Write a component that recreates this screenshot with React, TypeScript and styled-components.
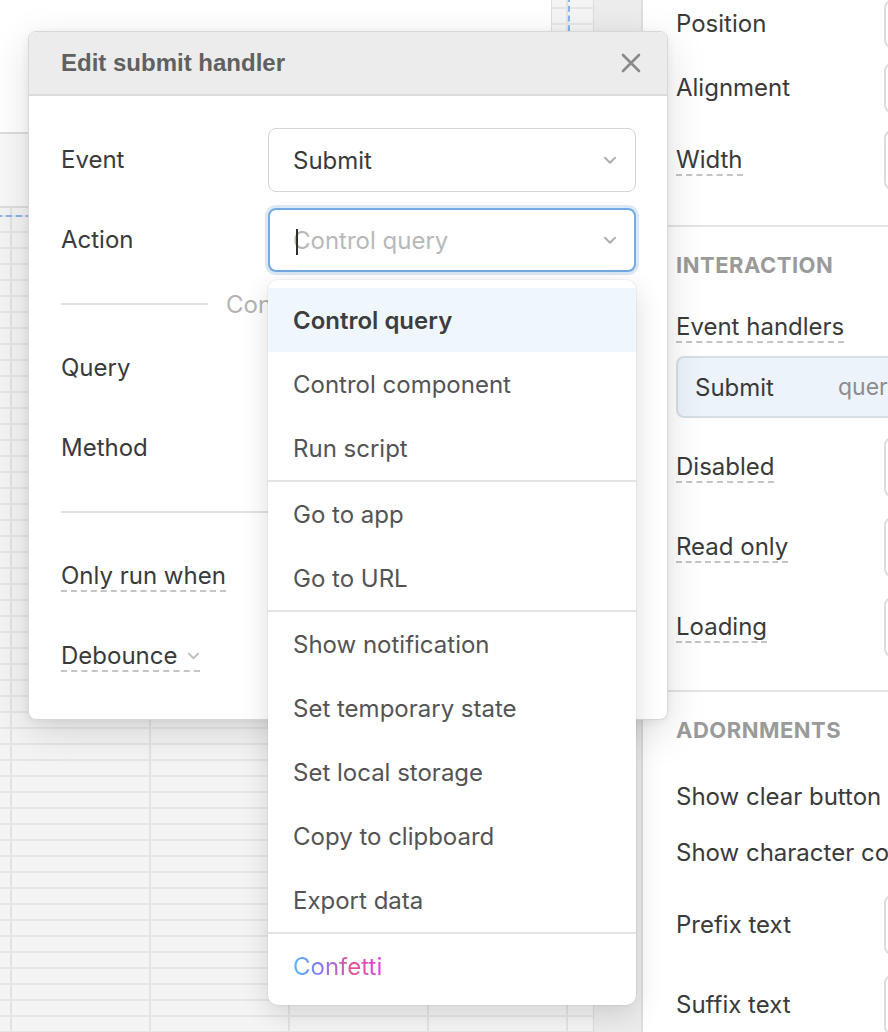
import React from 'react';
import styled, { createGlobalStyle } from 'styled-components';

const GlobalStyle = createGlobalStyle`
  * { box-sizing: border-box; }
  body {
    margin: 0;
    background: #ffffff;
    font-family: Inter, "Noto Sans", sans-serif;
  }
`;

const actionGroups = [
  ['Control query', 'Control component', 'Run script'],
  ['Go to app', 'Go to URL'],
  ['Show notification', 'Set temporary state', 'Set local storage', 'Copy to clipboard', 'Export data'],
];

const Page = styled.div`
  position: relative;
  display: flex;
  width: 888px;
  height: 1032px;
  overflow: hidden;
  color: #3d3d3d;
  font-family: Inter, "Noto Sans", sans-serif;
`;

// ---- canvas behind the modal ----
const Canvas = styled.div`
  position: relative;
  flex: 0 0 593px;
  background-color: #f4f4f4;
  background-image:
    linear-gradient(#e6e6e6 2px, transparent 2px),
    linear-gradient(90deg, #e3e3e3 2px, transparent 2px);
  background-size: 100% 16px, 139px 100%;
  background-position: 0 7px, 10px 0;
`;

const WidgetTop = styled.div`
  width: 552px;
  height: 134px;
  background: #ffffff;
  border-right: 1px solid #dedede;
  border-bottom: 2px solid #dddddd;
`;

const WidgetBody = styled.div`
  width: 552px;
  height: 74px;
  background: #f8f8f8;
  border-right: 1px solid #dedede;
  border-bottom: 2px solid #dddddd;
`;

const SelectionOutline = styled.div`
  position: absolute;
  left: -4px;
  top: -4px;
  width: 574px;
  height: 221px;
  border: 2px dashed #86b4e6;
  pointer-events: none;
`;

const Gutter = styled.div`
  flex: 0 0 50px;
  background: #ececec;
  border-left: 1px solid #dcdcdc;
  border-right: 2px solid #dedede;
`;

// ---- inspector on the right ----
const Inspector = styled.div`
  flex: 1;
  min-width: 0;
  background: #ffffff;
  overflow: hidden;
  white-space: nowrap;
`;

const Section = styled.div<{ $pt: number; $pb: number; $last?: boolean }>`
  padding: ${(p) => p.$pt}px 0 ${(p) => p.$pb}px 33px;
  border-bottom: ${(p) => (p.$last ? 'none' : '2px solid #e4e4e4')};
`;

const SectionTitle = styled.div`
  height: 36px;
  display: flex;
  align-items: center;
  font-size: 22px;
  font-weight: 700;
  letter-spacing: 0.5px;
  color: #9a9a9a;
`;

const PropRow = styled.div<{ $h: number; $mt?: number }>`
  height: ${(p) => p.$h}px;
  margin-top: ${(p) => p.$mt ?? 0}px;
  display: flex;
  align-items: center;
`;

const PropLabel = styled.span<{ $dashed?: boolean }>`
  flex-shrink: 0;
  padding-top: 2px;
  font-size: 24px;
  color: #3a3a3a;
  line-height: 28px;
  border-bottom: ${(p) => (p.$dashed ? '2px dashed #c4c4c4' : '2px solid transparent')};
`;

const FieldStub = styled.div<{ $h: number }>`
  flex-shrink: 0;
  width: 40px;
  height: ${(p) => p.$h}px;
  margin-left: auto;
  margin-right: -36px;
  border: 2px solid #dcdcdc;
  border-radius: 8px;
`;

const HandlerCard = styled.div`
  display: grid;
  grid-template-columns: 143px 1fr;
  align-items: center;
  height: 62px;
  margin: 5px -40px 0 0;
  padding-left: 17px;
  background: #edf3fb;
  border: 2px solid #d8dee6;
  border-radius: 8px;
`;

const HandlerName = styled.span`
  font-size: 24px;
  color: #3a3a3a;
`;

const HandlerTarget = styled.span`
  font-size: 23px;
  color: #8c8c8c;
`;

// ---- modal ----
const Modal = styled.div`
  position: absolute;
  left: 28px;
  top: 31px;
  z-index: 2;
  width: 640px;
  background: #ffffff;
  border: 1px solid #d8d8d8;
  border-radius: 8px;
  box-shadow: 0 12px 40px rgba(0, 0, 0, 0.13), 0 2px 8px rgba(0, 0, 0, 0.06);
`;

const ModalHeader = styled.div`
  height: 64px;
  display: flex;
  align-items: center;
  justify-content: space-between;
  padding: 0 25px 0 32px;
  background: #ececec;
  border-bottom: 2px solid #dcdcdc;
  border-radius: 8px 8px 0 0;
`;

const ModalTitle = styled.h2`
  margin: 0;
  font-family: "Liberation Sans", Arial, sans-serif;
  font-size: 24px;
  font-weight: 700;
  color: #606060;
`;

const CloseButton = styled.button`
  display: flex;
  padding: 0;
  border: none;
  background: none;
  cursor: pointer;
`;

const ModalBody = styled.div`
  display: flex;
  flex-direction: column;
  gap: 16px;
  padding: 32px 31px 31px 32px;
`;

const FormRow = styled.div`
  display: grid;
  grid-template-columns: 207px 1fr;
  align-items: center;
  height: 64px;
`;

const FormLabel = styled.span<{ $dashed?: boolean }>`
  justify-self: start;
  display: inline-flex;
  align-items: center;
  padding-top: 2px;
  font-size: 24px;
  line-height: 28px;
  color: #3a3a3a;
  border-bottom: ${(p) => (p.$dashed ? '2px dashed #c4c4c4' : '2px solid transparent')};
`;

const Field = styled.div`
  position: relative;
  height: 64px;
`;

const SelectBox = styled.div<{ $focused?: boolean }>`
  position: relative;
  height: 64px;
  display: flex;
  align-items: center;
  padding: 0 ${(p) => (p.$focused ? 23 : 24)}px;
  border: ${(p) => (p.$focused ? '2px solid #72a9e0' : '1px solid #d3d3d3')};
  border-radius: 8px;
  box-shadow: ${(p) => (p.$focused ? '0 0 0 3px #dce8f6' : 'none')};
  font-size: 24px;
  color: #3a3a3a;
  background: #ffffff;
`;

const Placeholder = styled.span`
  color: #b8b8b8;
`;

const Caret = styled.span`
  position: absolute;
  left: 26px;
  top: 19px;
  width: 2px;
  height: 26px;
  background: #2f2f2f;
`;

const ChevronSlot = styled.span`
  display: flex;
  margin-left: auto;
  margin-right: -6px;
`;

const RuleRow = styled.div`
  height: 32px;
  display: flex;
  align-items: center;
`;

const RuleLine = styled.div<{ $w?: number }>`
  flex: ${(p) => (p.$w ? `0 0 ${p.$w}px` : '1')};
  height: 2px;
  background: #e2e2e2;
`;

const RuleText = styled.span`
  margin: 0 18px;
  font-size: 24px;
  color: #b4b4b4;
`;

const SmallChevron = styled.span`
  display: flex;
  margin-left: 10px;
`;

// ---- dropdown menu ----
const Menu = styled.div`
  position: absolute;
  left: 0;
  top: calc(100% + 8px);
  z-index: 3;
  width: 100%;
  padding: 8px 0 7px;
  background: #ffffff;
  border-radius: 10px;
  box-shadow: 0 8px 28px rgba(0, 0, 0, 0.14), 0 0 0 1px rgba(0, 0, 0, 0.04);
`;

const MenuItem = styled.div<{ $active?: boolean }>`
  height: 64px;
  display: flex;
  align-items: center;
  padding-left: 25px;
  font-size: 24px;
  font-weight: ${(p) => (p.$active ? 600 : 400)};
  color: ${(p) => (p.$active ? '#3d3d3d' : '#545454')};
  background: ${(p) => (p.$active ? '#f0f7fc' : 'transparent')};
`;

const MenuSeparator = styled.div`
  height: 2px;
  background: #e3e3e3;
`;

const Confetti = styled.span`
  background: linear-gradient(90deg, #52b6ff 0%, #8f72f7 35%, #e0568f 65%, #e23ee9 100%);
  -webkit-background-clip: text;
  background-clip: text;
  color: transparent;
`;

const Chevron = ({ size = 14, color = '#b0b0b0' }: { size?: number; color?: string }) => (
  <svg width={size} height={size * 0.6} viewBox="0 0 14 8" fill="none">
    <path d="M2 1.5l5 5 5-5" stroke={color} strokeWidth="2" strokeLinecap="round" strokeLinejoin="round" />
  </svg>
);

const CloseIcon = () => (
  <svg width="22" height="22" viewBox="0 0 22 22" fill="none">
    <path d="M3 3l16 16M19 3L3 19" stroke="#8a8a8a" strokeWidth="2.6" strokeLinecap="round" />
  </svg>
);

export default function App() {
  return (
    <>
      <GlobalStyle />
      <Page>
        <Canvas>
          <WidgetTop />
          <WidgetBody />
          <SelectionOutline />
        </Canvas>
        <Gutter />
        <Inspector>
          <Section $pt={0} $pb={33}>
            <PropRow $h={48}>
              <PropLabel>Position</PropLabel>
              <FieldStub $h={48} />
            </PropRow>
            <PropRow $h={80}>
              <PropLabel>Alignment</PropLabel>
              <FieldStub $h={50} />
            </PropRow>
            <PropRow $h={64}>
              <PropLabel $dashed>Width</PropLabel>
              <FieldStub $h={60} />
            </PropRow>
          </Section>
          <Section $pt={20} $pb={23}>
            <SectionTitle>INTERACTION</SectionTitle>
            <PropRow $h={48} $mt={20}>
              <PropLabel $dashed>Event handlers</PropLabel>
            </PropRow>
            <HandlerCard>
              <HandlerName>Submit</HandlerName>
              <HandlerTarget>query1.trigger()</HandlerTarget>
            </HandlerCard>
            <PropRow $h={80} $mt={9}>
              <PropLabel $dashed>Disabled</PropLabel>
              <FieldStub $h={60} />
            </PropRow>
            <PropRow $h={80}>
              <PropLabel $dashed>Read only</PropLabel>
              <FieldStub $h={60} />
            </PropRow>
            <PropRow $h={80}>
              <PropLabel $dashed>Loading</PropLabel>
              <FieldStub $h={60} />
            </PropRow>
          </Section>
          <Section $pt={20} $pb={0} $last>
            <SectionTitle>ADORNMENTS</SectionTitle>
            <PropRow $h={56} $mt={21}>
              <PropLabel>Show clear button</PropLabel>
            </PropRow>
            <PropRow $h={56}>
              <PropLabel>Show character count</PropLabel>
            </PropRow>
            <PropRow $h={80} $mt={4}>
              <PropLabel>Prefix text</PropLabel>
              <FieldStub $h={60} />
            </PropRow>
            <PropRow $h={80}>
              <PropLabel>Suffix text</PropLabel>
              <FieldStub $h={60} />
            </PropRow>
          </Section>
        </Inspector>

        <Modal>
          <ModalHeader>
            <ModalTitle>Edit submit handler</ModalTitle>
            <CloseButton aria-label="Close">
              <CloseIcon />
            </CloseButton>
          </ModalHeader>
          <ModalBody>
            <FormRow>
              <FormLabel>Event</FormLabel>
              <SelectBox>
                Submit
                <ChevronSlot>
                  <Chevron />
                </ChevronSlot>
              </SelectBox>
            </FormRow>
            <FormRow>
              <FormLabel>Action</FormLabel>
              <Field>
                <SelectBox $focused>
                  <Placeholder>Control query</Placeholder>
                  <Caret />
                  <ChevronSlot>
                    <Chevron />
                  </ChevronSlot>
                </SelectBox>
                <Menu>
                  {actionGroups.map((group, gi) => (
                    <React.Fragment key={gi}>
                      {group.map((item) => (
                        <MenuItem key={item} $active={item === 'Control query'}>
                          {item}
                        </MenuItem>
                      ))}
                      <MenuSeparator />
                    </React.Fragment>
                  ))}
                  <MenuItem>
                    <Confetti>Confetti</Confetti>
                  </MenuItem>
                </Menu>
              </Field>
            </FormRow>
            <RuleRow>
              <RuleLine $w={147} />
              <RuleText>Control query</RuleText>
              <RuleLine />
            </RuleRow>
            <FormRow>
              <FormLabel>Query</FormLabel>
              <SelectBox />
            </FormRow>
            <FormRow>
              <FormLabel>Method</FormLabel>
              <SelectBox />
            </FormRow>
            <RuleRow>
              <RuleLine />
            </RuleRow>
            <FormRow>
              <FormLabel $dashed>Only run when</FormLabel>
              <SelectBox />
            </FormRow>
            <FormRow>
              <FormLabel $dashed>
                Debounce
                <SmallChevron>
                  <Chevron size={13} color="#bdbdbd" />
                </SmallChevron>
              </FormLabel>
              <SelectBox />
            </FormRow>
          </ModalBody>
        </Modal>
      </Page>
    </>
  );
}
